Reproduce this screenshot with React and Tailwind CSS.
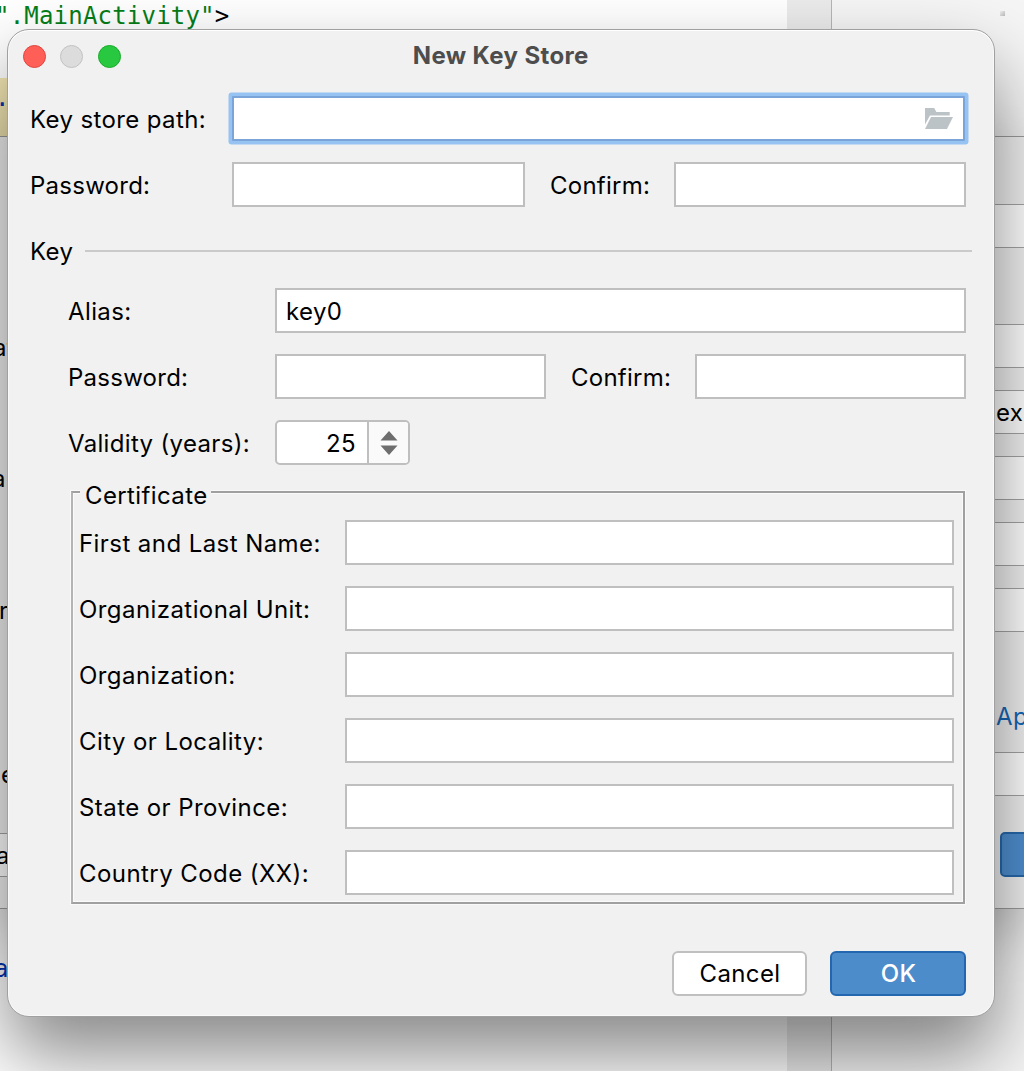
import React from "react";

const field = "h-[45px] border-2 border-[#bfbfbf] bg-white outline-none";

function Field({ className = "", label, ...props }) {
  return <input aria-label={label} className={`${field} ${className}`} {...props} />;
}

function Label({ className = "", children }) {
  return <span className={`shrink-0 whitespace-nowrap pt-[3px] ${className}`}>{children}</span>;
}

function FolderIcon() {
  return (
    <svg width="30" height="23" viewBox="0 0 30 23" fill="#bcc3c7">
      <path d="M1 1h9.2l2.2 4H25.700v3.500H6L1 17.500z" />
      <path d="M7 10h22l-6 12H1z" />
    </svg>
  );
}

const names = [
  "First and Last Name:",
  "Organizational Unit:",
  "Organization:",
  "City or Locality:",
  "State or Province:",
  "Country Code (XX):",
];

function Slot({ className = "", children }) {
  return (
    <div className={`h-11 shrink-0 border-y border-[#a4a4a4] bg-white ${className}`}>{children}</div>
  );
}

function Editor() {
  return (
    <div className="flex h-full bg-[#f5f5f5]">
      <div className="flex w-[787px] flex-col overflow-hidden bg-white font-['DejaVu_Sans_Mono',monospace] text-[24px] leading-[32px] tracking-[0.2px]">
        <div className="-ml-[5px] h-[78px] whitespace-pre text-[#067d17]">
          ".MainActivity"<span className="text-black">&gt;</span>
        </div>
        <div className="h-[60px] bg-[#f4e8b4] text-[#0033b3]">
          <div className="-ml-[5px] pt-1">.</div>
        </div>
        <div className="-ml-[6px] mt-[815px] text-[#0033b3]">a</div>
      </div>
      <div className="w-11 bg-[#ebebeb]" />
      <div className="flex-1 border-l-[1.500px] border-[#b5b5b5]">
        <div className="ml-[168px] mt-[11px] size-[5px] bg-linear-to-br from-[#f0f0f0] to-[#b8b8b8]" />
      </div>
    </div>
  );
}

function Wizard() {
  return (
    <div className="absolute -inset-x-1 top-[136px] flex h-[773px] justify-between border border-[#9b9b9b] bg-[#f1f1f1] px-[3px] shadow-[0_22px_50px_rgba(0,0,0,0.22)]">
      <div className="flex w-[12px] flex-col overflow-hidden leading-[30px]">
        <div className="-ml-[7px] mt-[196px]">at</div>
        <div className="-ml-[8px] mt-[101px]">a</div>
        <div className="-ml-[1px] mt-[102px]">r</div>
        <div className="ml-px mt-[134px]">e</div>
        <Slot className="mt-[43px] leading-[44px]">
          <div className="-ml-[4px]">a</div>
        </Slot>
      </div>
      <div className="flex w-[34px] flex-col overflow-hidden">
        <Slot className="mt-[67px]" />
        <Slot className="mt-[76px]" />
        <Slot className="mt-[22px] pl-[6px] leading-[44px] tracking-[0.4px]">ex</Slot>
        <Slot className="mt-[22px]" />
        <Slot className="mt-[22px]" />
        <Slot className="mt-[22px]" />
        <div className="mt-[69px] h-[31px] pl-[6px] leading-8 text-[#1467b8]">Ap</div>
        <Slot className="mt-[20px]" />
        <div className="ml-[9.500px] mt-[36px] h-[45px] w-12 shrink-0 rounded-[5px] border-2 border-[#2769ad] bg-[#4f90d1]" />
      </div>
    </div>
  );
}

function KeyStoreDialog() {
  return (
    <div className="absolute left-[7px] top-[29px] flex h-[988px] w-[987.500px] flex-col rounded-[22px] border border-[#a0a0a0] bg-[#f1f1f1] shadow-[inset_0_1px_0_#fff,inset_0_0_0_1px_#f9f9f9,0_38px_74px_rgba(0,0,0,0.47)]">
      <div className="grid h-[56px] shrink-0 grid-cols-3 items-center pb-[4px]">
        <div className="flex gap-[14.500px] pl-[14.500px]">
          <span className="size-[23px] rounded-full border border-[#e0443e] bg-[#ff5f57]" />
          <span className="size-[23px] rounded-full border border-[#c2c2c2] bg-[#dcdcdc]" />
          <span className="size-[23px] rounded-full border border-[#1aab29] bg-[#28c840]" />
        </div>
        <h1 className="text-center text-[24px] font-bold tracking-[0.38px] text-[#4d4d4d]">New Key Store</h1>
      </div>

      <div className="-mt-px flex flex-col pl-[22px] pr-[28px]">
        <div className="flex h-[66px] items-center">
          <Label className="w-[202px]">Key store path:</Label>
          <div className="mr-[0.500px] flex h-[45px] flex-1 items-center justify-end rounded-[1px] border-2 border-[#7ba5d8] bg-white pr-[9px] pt-px shadow-[0_0_0_3.500px_#97c3f3]">
            <input aria-label="Key store path" className="min-w-0 flex-1 outline-none" />
            <FolderIcon />
          </div>
        </div>
        <div className="flex h-[66px] items-center">
          <Label className="w-[202px] tracking-[0.25px]">Password:</Label>
          <Field label="Password" className="w-[293px]" />
          <Label className="w-[149px] pl-[25px] tracking-[0.25px]">Confirm:</Label>
          <Field label="Confirm" className="min-w-0 flex-1" />
        </div>
        <div className="-mr-[6px] flex h-[66px] items-center gap-3">
          <Label>Key</Label>
          <div className="mt-[2px] h-[2px] flex-1 bg-[#cacaca]" />
        </div>
        <div className="-mt-[6px] flex h-[66px] items-center pl-[38px]">
          <Label className="w-[207px]">Alias:</Label>
          <Field label="Alias" className="min-w-0 flex-1 px-[9px] pt-[2px]" defaultValue="key0" />
        </div>
        <div className="flex h-[66px] items-center pl-[38px]">
          <Label className="w-[207px] tracking-[0.25px]">Password:</Label>
          <Field label="Key password" className="w-[271px]" />
          <Label className="w-[149px] pl-[25px] tracking-[0.25px]">Confirm:</Label>
          <Field label="Confirm key password" className="min-w-0 flex-1" />
        </div>
        <div className="flex h-[66px] items-center pl-[38px]">
          <Label className="w-[207px] tracking-[0.33px]">Validity (years):</Label>
          <div className="flex h-[45px] w-[135px] overflow-hidden rounded-[5px] border-2 border-[#bfbfbf] bg-white">
            <span className="flex flex-1 items-center justify-end pr-[11px] pt-[3px]">25</span>
            <span className="flex w-[41px] items-center justify-center border-l-2 border-[#bfbfbf] bg-[#fafafa] pt-px">
              <svg width="18" height="26" viewBox="0 0 18 26" fill="#6e6e6e">
                <path d="M9 1l8.500 9.500H.5zM.5 15.500h17L9 25z" />
              </svg>
            </span>
          </div>
        </div>
        <fieldset className="ml-[41px] mr-px mt-[4px] h-[425px] border-2 border-[#a0a0a0] border-l-[#b4b4b4] pl-[6px] pr-[9px] shadow-[inset_0_0_0_1px_#fafafa,0_0_0_1px_#f9f9f9]">
          <legend className="ml-[1px] h-[26px] bg-[#f1f1f1] pl-[5px] pr-[3px] pt-[2px] leading-[30px]">Certificate</legend>
          <div className="pt-[4px]">
            {names.map((name) => (
              <div key={name} className="flex h-[66px] items-center">
                <Label className="w-[265.500px] tracking-[0.43px]">{name}</Label>
                <Field label={name} className="min-w-0 flex-1" />
              </div>
            ))}
          </div>
        </fieldset>
        <div className="mt-[47px] flex justify-end gap-[23px]">
          <button className="h-[45px] w-[135px] rounded-[6px] border-2 border-[#c0c0c0] bg-white pl-[2px] pt-px">Cancel</button>
          <button className="h-[45px] w-[136px] rounded-[6px] border-2 border-[#2467b1] bg-[#4d8ccb] pl-[2px] pt-px font-medium text-white">OK</button>
        </div>
      </div>
    </div>
  );
}

export default function App() {
  return (
    <div className="relative h-[1071px] w-[1024px] overflow-hidden bg-white font-[Inter,sans-serif] text-[24px] tracking-[0.38px] text-black">
      <Editor />
      <Wizard />
      <KeyStoreDialog />
    </div>
  );
}
